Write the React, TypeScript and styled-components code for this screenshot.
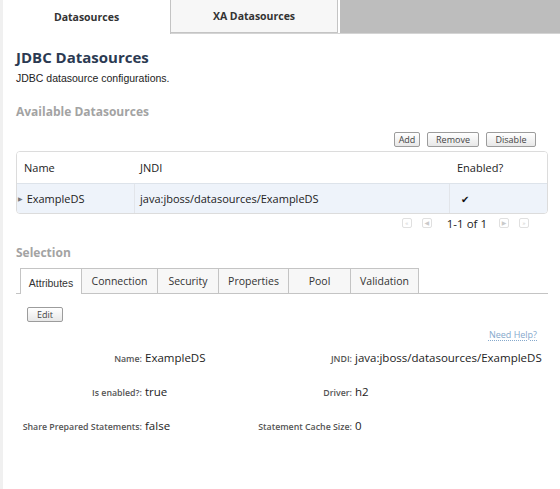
import React from "react";
import styled, { createGlobalStyle } from "styled-components";

const GlobalStyle = createGlobalStyle`
  html, body {
    margin: 0;
    padding: 0;
    background: #ffffff;
  }
  body {
    font-family: "Open Sans", "DejaVu Sans", sans-serif;
    color: #222;
  }
`;

const Page = styled.div`
  width: 560px;
  height: 489px;
  box-sizing: border-box;
  border-left: 3px solid #f0f0f0;
  overflow: hidden;
`;

const TopTabs = styled.div`
  display: flex;
  height: 33px;
  background: #bdbdbd;
  border-bottom: 1px solid #d4d4d4;
`;

const TopTab = styled.div<{ active?: boolean; w: number }>`
  width: ${(p) => p.w}px;
  display: flex;
  align-items: center;
  justify-content: center;
  font-size: 10.5px;
  font-weight: bold;
  color: #333;
  box-sizing: border-box;
  background: ${(p) => (p.active ? "#ffffff" : "#f7f7f7")};
  border-right: 1px solid #c4c4c4;
  border-bottom: ${(p) => (p.active ? "none" : "1px solid #c4c4c4")};
  margin-bottom: ${(p) => (p.active ? "-1px" : "0")};
  height: ${(p) => (p.active ? "34px" : "33px")};
  box-shadow: ${(p) => (p.active ? "none" : "2px 0 0 #ffffff")};
`;

const Content = styled.div`
  padding: 12px 0 0 13px;
  width: 532px;
`;

const Title = styled.h1`
  margin: 0;
  font-size: 15px;
  font-weight: bold;
  color: #2b3a52;
  line-height: 22px;
`;

const Subtitle = styled.p`
  margin: 4px 0 0;
  font-family: "Liberation Sans", Arial, sans-serif;
  font-size: 10.5px;
  line-height: 13px;
  color: #222;
`;

const SectionTitle = styled.h2<{ top: number }>`
  margin: ${(p) => p.top}px 0 0;
  font-size: 12px;
  font-weight: bold;
  color: #a3a3a3;
  line-height: 16px;
`;

const Toolbar = styled.div`
  display: flex;
  justify-content: flex-end;
  gap: 7px;
  margin-top: 12px;
  padding-right: 12px;
`;

const SmallButton = styled.button<{ w: number }>`
  width: ${(p) => p.w}px;
  height: 15px;
  padding: 0;
  font-family: "Open Sans", sans-serif;
  font-size: 9px;
  line-height: 13px;
  color: #444;
  background: linear-gradient(#ffffff, #e8e8e8);
  border: 1px solid #9c9c9c;
  border-radius: 2px;
`;

const Table = styled.div`
  margin-top: 4px;
  border: 1px solid #dcdcdc;
  border-radius: 4px;
  overflow: hidden;
`;

const Row = styled.div<{ head?: boolean }>`
  display: grid;
  grid-template-columns: 117px 315px 1fr;
  height: ${(p) => (p.head ? "31px" : "29px")};
  background: ${(p) => (p.head ? "#ffffff" : "#eef3fa")};
  border-top: ${(p) => (p.head ? "none" : "1px solid #dde3ea")};
  font-size: 11px;
  color: #222;
`;

const Cell = styled.div<{ divider?: boolean; pad: number }>`
  display: flex;
  align-items: center;
  padding-left: ${(p) => p.pad}px;
  border-left: ${(p) => (p.divider ? "1px solid #e2e5ea" : "none")};
  white-space: nowrap;
`;

const Arrow = styled.span`
  font-size: 6px;
  color: #777;
  margin-right: 4px;
`;

const Check = styled.span`
  font-size: 10px;
  color: #111;
  padding-left: 3px;
`;

const Pager = styled.div`
  display: flex;
  justify-content: flex-end;
  align-items: center;
  margin-top: 1px;
  padding-right: 19px;
  height: 16px;
`;

const PageIcon = styled.span<{ gap: number }>`
  width: 10px;
  height: 10px;
  margin-left: ${(p) => p.gap}px;
  border: 1px solid #e0e0e0;
  border-radius: 2px;
  box-sizing: border-box;
  display: flex;
  align-items: center;
  justify-content: center;
  color: #cacaca;
  font-size: 6px;
  line-height: 1;
`;

const PageText = styled.span`
  font-size: 11.5px;
  color: #222;
  margin-left: 15px;
`;

const SubTabs = styled.div`
  display: flex;
  margin-top: 7px;
  border-bottom: 1px solid #c4c4c4;
  padding-left: 4px;
  height: 25px;
`;

const SubTab = styled.div<{ w: number; active?: boolean }>`
  width: ${(p) => p.w}px;
  box-sizing: border-box;
  display: flex;
  align-items: center;
  justify-content: center;
  font-size: 10.5px;
  font-family: ${(p) =>
    p.active ? '"Liberation Sans", Arial, sans-serif' : '"Open Sans", sans-serif'};
  color: #333;
  background: ${(p) => (p.active ? "#ffffff" : "#f7f7f7")};
  border: 1px solid #c4c4c4;
  border-bottom: none;
  border-left: ${(p) => (p.active ? "1px solid #c4c4c4" : "none")};
  height: ${(p) => (p.active ? "26px" : "25px")};
  margin-bottom: ${(p) => (p.active ? "-1px" : "0")};
  padding-top: ${(p) => (p.active ? "3px" : "0")};
`;

const EditRow = styled.div`
  display: flex;
  margin-top: 13px;
  padding-left: 11px;
`;

const HelpRow = styled.div`
  display: flex;
  justify-content: flex-end;
  margin-top: 7px;
  padding-right: 11px;
`;

const HelpLink = styled.a`
  font-size: 9px;
  line-height: 12px;
  color: #86a9cc;
  text-decoration: underline dotted;
  text-underline-offset: 2px;
`;

const Details = styled.div`
  display: grid;
  grid-template-columns: 129px 100px 110px auto;
  row-gap: 18px;
  margin-top: 9px;
  align-items: baseline;
`;

const Label = styled.span`
  text-align: right;
  font-size: 8.8px;
  font-weight: 600;
  color: #555;
  white-space: nowrap;
  padding-right: 3px;
`;

const Value = styled.span`
  font-size: 11.5px;
  line-height: 16px;
  color: #222;
  white-space: nowrap;
`;

const details: [string, string, string, string][] = [
  ["Name:", "ExampleDS", "JNDI:", "java:jboss/datasources/ExampleDS"],
  ["Is enabled?:", "true", "Driver:", "h2"],
  ["Share Prepared Statements:", "false", "Statement Cache Size:", "0"],
];

const subTabs: [string, number][] = [
  ["Attributes", 62],
  ["Connection", 76],
  ["Security", 61],
  ["Properties", 70],
  ["Pool", 62],
  ["Validation", 68],
];

export default function App() {
  return (
    <Page>
      <GlobalStyle />
      <TopTabs>
        <TopTab active w={168}>
          Datasources
        </TopTab>
        <TopTab w={167}>XA Datasources</TopTab>
      </TopTabs>
      <Content>
        <Title>JDBC Datasources</Title>
        <Subtitle>JDBC datasource configurations.</Subtitle>

        <SectionTitle top={19}>Available Datasources</SectionTitle>
        <Toolbar>
          <SmallButton w={26}>Add</SmallButton>
          <SmallButton w={52}>Remove</SmallButton>
          <SmallButton w={50}>Disable</SmallButton>
        </Toolbar>
        <Table>
          <Row head>
            <Cell pad={7}>Name</Cell>
            <Cell pad={6}>JNDI</Cell>
            <Cell pad={8}>Enabled?</Cell>
          </Row>
          <Row>
            <Cell pad={1}>
              <Arrow>▶</Arrow>ExampleDS
            </Cell>
            <Cell pad={5} divider>
              java:jboss/datasources/ExampleDS
            </Cell>
            <Cell pad={8} divider>
              <Check>✔</Check>
            </Cell>
          </Row>
        </Table>
        <Pager>
          <PageIcon gap={0}>«</PageIcon>
          <PageIcon gap={10}>◀</PageIcon>
          <PageText>1-1 of 1</PageText>
          <PageIcon gap={12}>▶</PageIcon>
          <PageIcon gap={10}>»</PageIcon>
        </Pager>

        <SectionTitle top={14}>Selection</SectionTitle>
        <SubTabs>
          {subTabs.map(([name, w], i) => (
            <SubTab key={name} w={w} active={i === 0}>
              {name}
            </SubTab>
          ))}
        </SubTabs>
        <EditRow>
          <SmallButton w={36}>Edit</SmallButton>
        </EditRow>
        <HelpRow>
          <HelpLink href="#">Need Help?</HelpLink>
        </HelpRow>
        <Details>
          {details.map(([l1, v1, l2, v2]) => (
            <React.Fragment key={l1}>
              <Label>{l1}</Label>
              <Value>{v1}</Value>
              <Label>{l2}</Label>
              <Value>{v2}</Value>
            </React.Fragment>
          ))}
        </Details>
      </Content>
    </Page>
  );
}
